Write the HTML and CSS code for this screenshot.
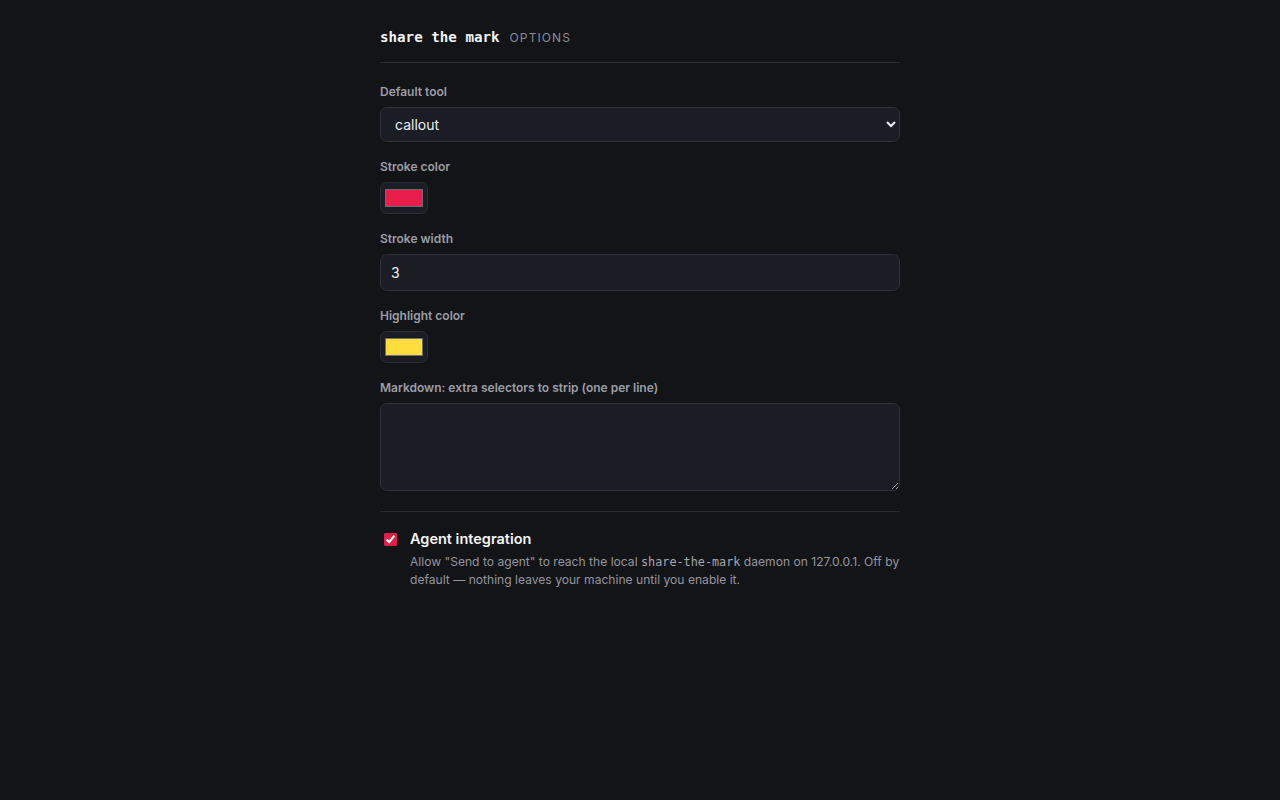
FILE: index.html
```html
<!DOCTYPE html>
<html>
<head>
<meta charset="utf-8">
<link rel="stylesheet" href="styles.css">
</head>
<body>
<main class="page">
  <header class="header">
    <span class="brand">share the mark</span>
    <span class="tag">OPTIONS</span>
  </header>

  <div class="field">
    <label class="label" for="tool">Default tool</label>
    <select id="tool" class="control select">
      <option>callout</option>
      <option>arrow</option>
      <option>box</option>
    </select>
  </div>

  <div class="field">
    <label class="label" for="stroke">Stroke color</label>
    <input id="stroke" class="swatch" type="color" value="#e91e4c">
  </div>

  <div class="field">
    <label class="label" for="width">Stroke width</label>
    <input id="width" class="control input" type="number" value="3">
  </div>

  <div class="field">
    <label class="label" for="hl">Highlight color</label>
    <input id="hl" class="swatch" type="color" value="#ffdd3d">
  </div>

  <div class="field">
    <label class="label" for="sel">Markdown: extra selectors to strip (one per line)</label>
    <textarea id="sel" class="control textarea"></textarea>
  </div>

  <section class="agent">
    <input id="agent" class="check" type="checkbox" checked>
    <div class="agent-text">
      <label class="agent-title" for="agent">Agent integration</label>
      <p class="agent-desc">Allow "Send to agent" to reach the local <code class="mono">share-the-mark</code> daemon on 127.0.0.1. Off by default — nothing leaves your machine until you enable it.</p>
    </div>
  </section>
</main>
</body>
</html>
```

FILE: styles.css
```css
html, body {
  margin: 0;
  padding: 0;
  background: #131418;
  color: #e6e7ea;
  font-family: Inter, "Noto Sans", sans-serif;
}

.page {
  width: 520px;
  margin: 0 auto;
  padding-top: 28px;
}

.header {
  display: flex;
  align-items: baseline;
  gap: 10px;
  padding-bottom: 16px;
  border-bottom: 1px solid #2a2c31;
  margin-bottom: 20px;
}

.brand {
  font-family: "DejaVu Sans Mono", "Liberation Mono", monospace;
  font-weight: bold;
  font-size: 14.2px;
  color: #f2f3f5;
  line-height: 18px;
}

.tag {
  font-size: 12px;
  letter-spacing: 1.1px;
  color: #8b8e96;
}

.field {
  display: flex;
  flex-direction: column;
  align-items: flex-start;
  margin-bottom: 16px;
}

.label {
  font-size: 12px;
  font-weight: 600;
  color: #9b9ea5;
  line-height: 18px;
  margin-bottom: 6px;
}

.control {
  box-sizing: border-box;
  width: 100%;
  background: #1b1d24;
  border: 1px solid #2e3138;
  border-radius: 7px;
  color: #eef0f3;
  font-family: Inter, "Noto Sans", sans-serif;
  font-size: 14px;
  outline: none;
}

.select {
  height: 35px;
  padding: 0 10px;
  color-scheme: dark;
}

.input {
  height: 37px;
  padding: 0 10px;
  appearance: textfield;
  -moz-appearance: textfield;
}
.input::-webkit-inner-spin-button,
.input::-webkit-outer-spin-button {
  -webkit-appearance: none;
  margin: 0;
}

.textarea {
  height: 88px;
  padding: 8px 10px;
  resize: vertical;
  color-scheme: dark;
  display: block;
}

.swatch {
  -webkit-appearance: none;
  appearance: none;
  box-sizing: border-box;
  width: 48px;
  height: 32px;
  padding: 0;
  margin: 0;
  background: #1b1d24;
  border: 1px solid #2a2d33;
  border-radius: 7px;
  cursor: pointer;
}
.swatch::-webkit-color-swatch-wrapper {
  padding: 6px 4px;
}
.swatch::-webkit-color-swatch {
  border: 1px solid #6b6e76;
  border-radius: 0;
}

.agent {
  display: flex;
  align-items: flex-start;
  gap: 13px;
  border-top: 1px solid #2a2c31;
  margin-top: 20px;
  padding-top: 17px;
}

.check {
  margin: 4px 0 0 4px;
  width: 13px;
  height: 13px;
  accent-color: #e11d48;
  flex: none;
}

.agent-text {
  display: flex;
  flex-direction: column;
}

.agent-title {
  font-size: 14.5px;
  font-weight: 600;
  color: #f4f5f7;
  line-height: 20px;
}

.agent-desc {
  margin: 4px 0 0;
  font-size: 12.1px;
  line-height: 18px;
  color: #93969d;
}

.mono {
  font-family: "DejaVu Sans Mono", "Liberation Mono", monospace;
  font-size: 11.8px;
  color: #a5a8ae;
}
```
